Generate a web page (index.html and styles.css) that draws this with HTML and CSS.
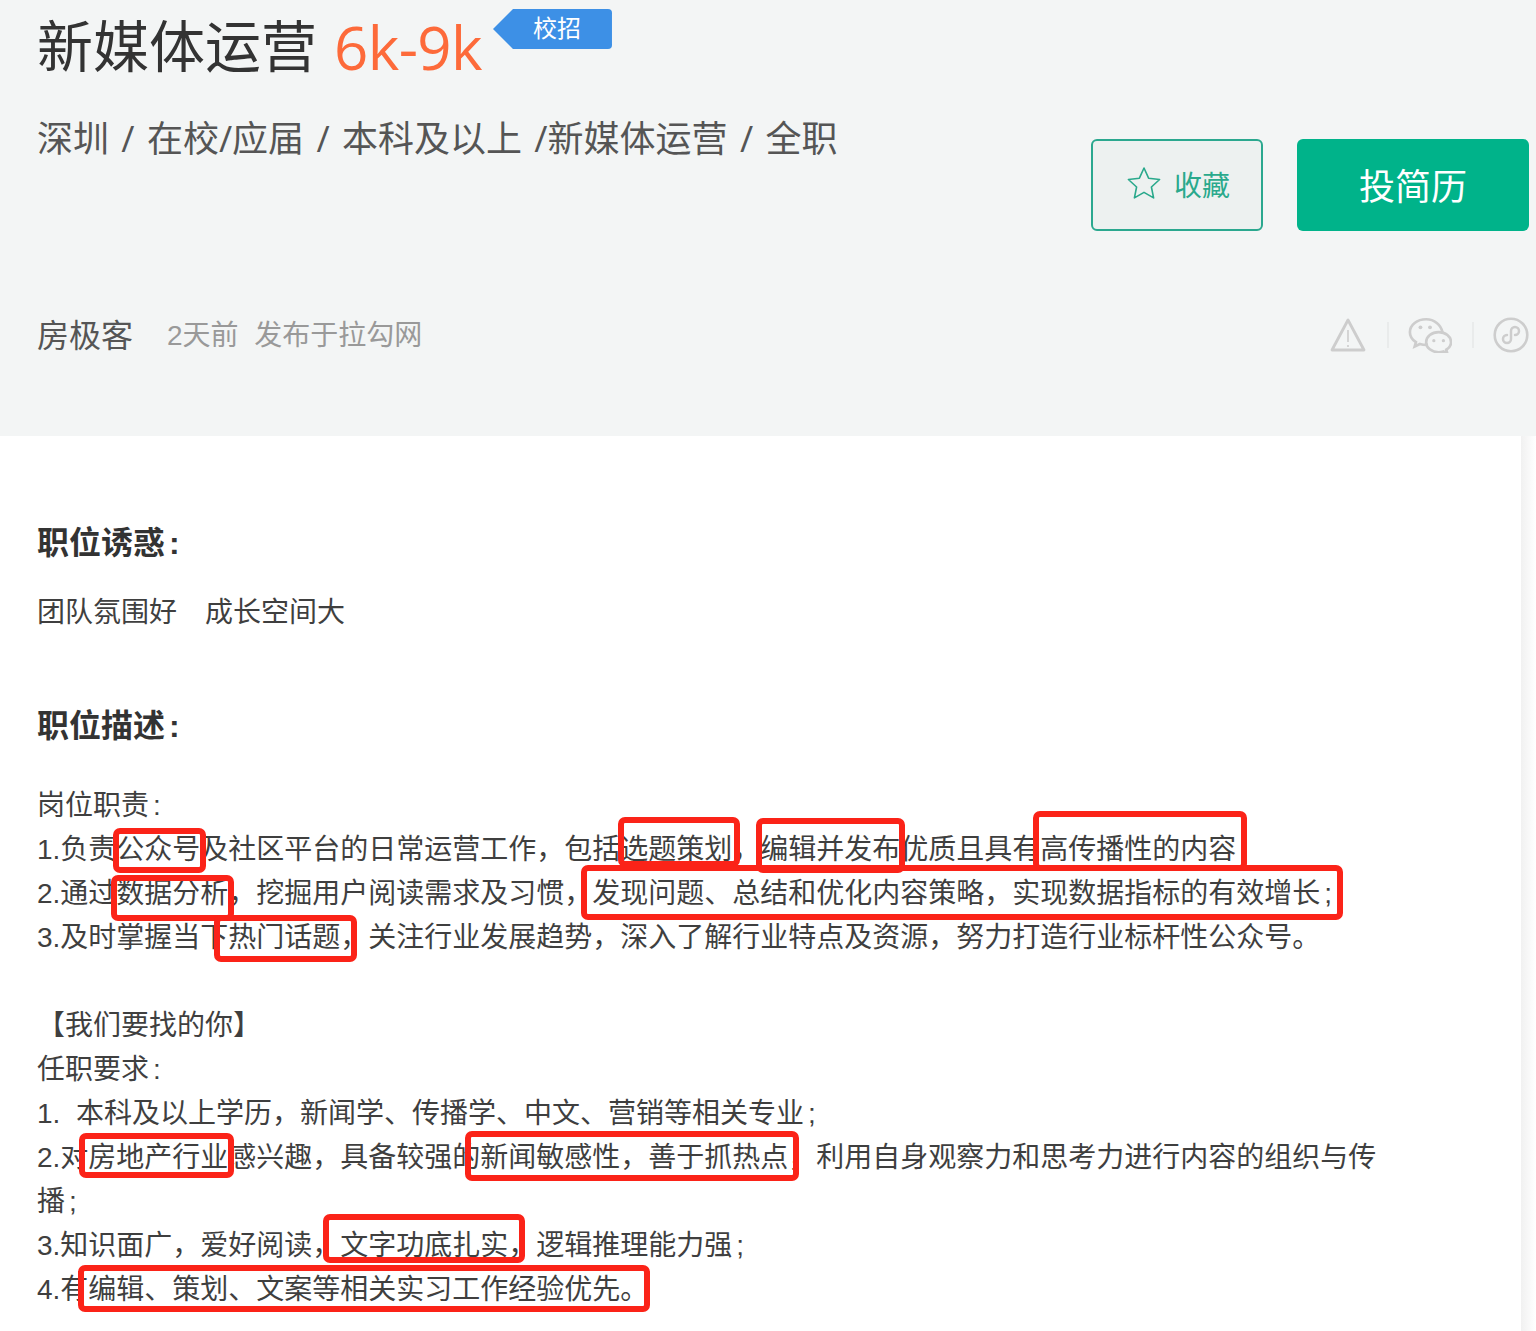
FILE: index.html
```html
<!DOCTYPE html>
<html lang="zh-CN">
<head>
<meta charset="utf-8">
<title>新媒体运营</title>
<link rel="stylesheet" href="styles.css">
</head>
<body>
<div class="page">
  <header class="head">
    <div class="head-left">
      <div class="title-row">
        <h1 class="job-name">新媒体运营</h1>
        <span class="salary">6k-9k</span>
        <span class="tag">校招</span>
      </div>
      <p class="job-req">深圳 / 在校/应届 / 本科及以上 /新媒体运营 / 全职</p>
      <p class="publish"><span class="company">房极客</span><span class="time">2天前&nbsp;&nbsp;发布于拉勾网</span></p>
    </div>
    <div class="head-right">
      <div class="actions">
        <a class="btn-fav">
          <svg class="star" viewBox="0 0 36 34" width="36" height="34"><path d="M18 2l4.6 10.2 11 1.3-8.2 7.5 2.2 10.9L18 26.4 8.4 31.9l2.2-10.9-8.2-7.5 11-1.3z" fill="none" stroke="currentColor" stroke-width="1.6" stroke-linejoin="round"/></svg>
          <span>收藏</span>
        </a>
        <a class="btn-apply">投简历</a>
      </div>
      <div class="tools">
        <svg class="tool" viewBox="0 0 38 36" width="38" height="36"><path d="M19 3L3 33h32z" fill="none" stroke="currentColor" stroke-width="2.8" stroke-linejoin="round"/><path d="M19 13v12M19 28v2" fill="none" stroke="currentColor" stroke-width="1.6"/></svg>
        <span class="sep"></span>
        <svg class="tool" viewBox="0 0 46 36" width="44" height="36"><path d="M19 1.500C9.500 1.500 2 7.500 2 15c0 4.300 2.500 8 6.300 10.500L7 30l5.500-2.600c2.200.7 4.500 1 7 1M36 15C34.500 7.500 27.500 1.500 19 1.500" fill="none" stroke="currentColor" stroke-width="2.800" stroke-linecap="round"/><path d="M32 15c-7.200 0-13 4.700-13 10.500S24.800 36 32 36c1.800 0 3.500-.3 5-.8l4 1.800-1-3.600c3.300-2 5-4.900 5-7.900C45 19.700 39.200 15 32 15z" fill="none" stroke="currentColor" stroke-width="2.800"/><circle cx="13" cy="10" r="2" fill="currentColor"/><circle cx="23" cy="10" r="2" fill="currentColor"/><circle cx="27" cy="24" r="1.700" fill="currentColor"/><circle cx="37" cy="24" r="1.700" fill="currentColor"/></svg>
        <span class="sep"></span>
        <svg class="tool" viewBox="0 0 36 36" width="36" height="36"><circle cx="18" cy="18" r="16.300" fill="none" stroke="currentColor" stroke-width="2.600"/><path d="M18 14v8a4 4 0 1 1-4-4M18 22v-8a4 4 0 1 1 4 4" fill="none" stroke="currentColor" stroke-width="2.500" stroke-linecap="round"/></svg>
      </div>
    </div>
  </header>
  <div class="lower">
    <main class="content">
      <h2 class="sec-title sec-first">职位诱惑<span class="pt">:</span></h2>
      <p class="perks">团队氛围好　成长空间大</p>
      <h2 class="sec-title sec-second">职位描述<span class="pt">:</span></h2>
      <div class="desc">
        <p>岗位职责<span class="pt">:</span></p>
        <p>1.负责公众号及社区平台的日常运营工作，包括选题策划，编辑并发布优质且具有高传播性的内容</p>
        <p>2.通过数据分析，挖掘用户阅读需求及习惯，发现问题、总结和优化内容策略，实现数据指标的有效增长<span class="pt">;</span></p>
        <p>3.及时掌握当下热门话题，关注行业发展趋势，深入了解行业特点及资源，努力打造行业标杆性公众号。</p>
        <p>&nbsp;</p>
        <p>【我们要找的你】</p>
        <p>任职要求<span class="pt">:</span></p>
        <p>1.&nbsp;&nbsp;本科及以上学历，新闻学、传播学、中文、营销等相关专业<span class="pt">;</span></p>
        <p>2.对房地产行业感兴趣，具备较强的新闻敏感性，善于抓热点，利用自身观察力和思考力进行内容的组织与传播<span class="pt">;</span></p>
        <p>3.知识面广，爱好阅读，文字功底扎实，逻辑推理能力强<span class="pt">;</span></p>
        <p>4.有编辑、策划、文案等相关实习工作经验优先。</p>
      </div>
      <i class="mark m1"></i><i class="mark m2"></i><i class="mark m3"></i><i class="mark m4"></i>
      <i class="mark m5"></i><i class="mark m6"></i><i class="mark m7"></i><i class="mark m8"></i>
      <i class="mark m9"></i><i class="mark m10"></i><i class="mark m11"></i>
    </main>
    <div class="strip"></div>
  </div>
</div>
</body>
</html>
```

FILE: styles.css
```css
* { box-sizing: border-box; }
html, body { margin: 0; padding: 0; }
body {
  background: #fff;
  color: #333;
  font-family: "Liberation Sans", "Noto Sans CJK SC", sans-serif;
  height: 1331px;
  overflow: hidden;
}
h1, h2, p { margin: 0; font-weight: 400; }

.page { width: 1536px; }

.head {
  display: flex;
  justify-content: space-between;
  height: 436px;
  padding: 0 7px 0 37px;
  background: #f3f5f5;
}

.title-row { display: flex; align-items: flex-start; height: 94px; }
.job-name { font-size: 56px; line-height: 96px; color: #333; }
.salary {
  margin-left: 17px;
  font-family: "Open Sans", sans-serif;
  font-size: 60px;
  letter-spacing: -0.6px;
  line-height: 94px;
  color: #fd6a3a;
}
.tag {
  margin: 9px 0 0 11px;
  width: 119px;
  height: 40px;
  padding-left: 40px;
  border-radius: 4px;
  background: #3d90e6;
  clip-path: polygon(20px 0, 100% 0, 100% 100%, 20px 100%, 0 50%);
  color: #fff;
  font-size: 24px;
  line-height: 40px;
}
.job-req {
  margin-top: 21px;
  font-family: "Open Sans", "Noto Sans CJK SC", sans-serif;
  font-size: 36px;
  line-height: 48px;
  word-spacing: 3px;
  color: #555;
}
.publish { display: flex; align-items: center; margin-top: 149px; line-height: 48px; }
.company { font-size: 32px; color: #555; }
.time { margin-left: 34px; font-size: 28px; color: #999; }

.head-right { display: flex; flex-direction: column; align-items: flex-end; padding-top: 139px; }
.actions { display: flex; gap: 34px; }
.btn-fav {
  display: flex;
  align-items: center;
  justify-content: center;
  gap: 12px;
  width: 172px;
  height: 92px;
  padding: 0 0 2px 2px;
  border: 2px solid #2ba88f;
  border-radius: 6px;
  background: #edf1f0;
  color: #2aa98c;
  font-size: 28px;
}
.star { flex: none; margin-bottom: 2px; }
.btn-apply {
  display: flex;
  align-items: center;
  justify-content: center;
  width: 232px;
  height: 92px;
  padding-bottom: 2px;
  border-radius: 6px;
  background: #00b38a;
  color: #fff;
  font-size: 36px;
}
.tools { display: flex; align-items: center; margin-top: 86px; color: #cdcdcd; }
.tool { flex: none; }
.sep { width: 2px; height: 26px; margin: 0 19px 0 20px; background: #e9ebeb; }

.lower { display: flex; height: 895px; }
.content {
  position: relative;
  flex: none;
  width: 1521px;
  padding: 0 37px;
  background: #fff;
}
.strip { flex: 1; background: linear-gradient(90deg, #f1f1f1, #fff); }
.sec-title { font-size: 32px; font-weight: 700; line-height: 48px; color: #333; }
.sec-first { padding-top: 83px; box-sizing: content-box; }
.perks { margin-top: 24px; font-size: 28px; line-height: 44px; color: #3f3f3f; }
.sec-second { margin-top: 67px; }
.desc { margin-top: 34px; width: 1350px; font-size: 28px; line-height: 44px; color: #3f3f3f; }
.pt { margin-left: 4px; }

.mark {
  position: absolute;
  border: 6px solid #fb2318;
  border-radius: 7px;
}
.m1 { left: 113px; top: 392px; width: 93px; height: 45px; }
.m2 { left: 618px; top: 381px; width: 122px; height: 50px; }
.m3 { left: 756px; top: 382px; width: 149px; height: 55px; }
.m4 { left: 1033px; top: 375px; width: 214px; height: 60px; }
.m5 { left: 111px; top: 439px; width: 123px; height: 46px; }
.m6 { left: 581px; top: 429px; width: 762px; height: 55px; }
.m7 { left: 214px; top: 479px; width: 143px; height: 47px; }
.m8 { left: 79px; top: 697px; width: 155px; height: 45px; }
.m9 { left: 465px; top: 695px; width: 334px; height: 50px; }
.m10 { left: 323px; top: 778px; width: 202px; height: 49px; }
.m11 { left: 78px; top: 829px; width: 572px; height: 47px; }
```
